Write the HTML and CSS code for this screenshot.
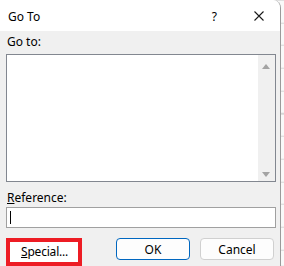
FILE: index.html
```html
<!DOCTYPE html>
<html lang="en">
<head>
    <meta charset="UTF-8">
    <title>Go To</title>
    <link rel="stylesheet" href="styles.css">
</head>
<body>
    <div class="dialogo">
        <div class="titulo">
            <span class="titulo-texto">Go To</span>
            <span class="ayuda">?</span>
            <svg class="cerrar" width="10" height="10" viewBox="0 0 10 10">
                <path d="M0.5 0.5 L9.5 9.5 M9.5 0.5 L0.5 9.5" stroke="#1a1a1a" stroke-width="1.1" fill="none"/>
            </svg>
        </div>
        <div class="cuerpo">
            <div class="etiqueta">Go to:</div>
            <div class="lista">
                <div class="lista-area"></div>
                <div class="barra">
                    <span class="flecha arriba"></span>
                    <span class="flecha abajo"></span>
                </div>
            </div>
            <div class="etiqueta etiqueta-ref"><u>R</u>eference:</div>
            <div class="entrada"><span class="cursor"></span></div>
            <div class="botones">
                <div class="marca-roja">
                    <span class="boton-especial"><u>S</u>pecial...</span>
                </div>
                <span class="boton primario">OK</span>
                <span class="boton">Cancel</span>
            </div>
        </div>
    </div>
</body>
</html>
```

FILE: styles.css
```css
body {
    margin: 0;
    height: 266px;
    overflow: hidden;
    background-color: #f9f9f9;
    background-image: repeating-linear-gradient(to bottom, #d6d6d6 0, #d6d6d6 1px, transparent 1px, transparent 22.7px);
    background-position: 0 -0.3px;
    font-family: "Noto Sans", "Open Sans", sans-serif;
    font-size: 12px;
    color: #000;
}

.dialogo {
    width: 280px;
    height: 266px;
    background: #f0f0f0;
    border-right: 1px solid #9a9a9a;
    border-top-right-radius: 8px;
    overflow: hidden;
    display: flex;
    flex-direction: column;
}

.titulo {
    height: 31px;
    background: #fff;
    display: flex;
    align-items: center;
    padding: 0 16px 0 8px;
    flex-shrink: 0;
}

.titulo-texto {
    flex: 1;
    font-size: 12px;
    padding-top: 1px;
}

.ayuda {
    font-size: 12px;
    margin-right: 37px;
    padding-top: 1px;
}

.cerrar {
    display: block;
}

.cuerpo {
    padding: 3px 0 0 6px;
    display: flex;
    flex-direction: column;
}

.etiqueta {
    line-height: 16px;
    margin-left: 1px;
    height: 16px;
}

.lista {
    margin-top: 4px;
    width: 268px;
    height: 126px;
    border: 1px solid #828790;
    background: #fff;
    display: flex;
}

.lista-area {
    flex: 1;
}

.barra {
    width: 17px;
    background: #f0f0f0;
    position: relative;
}

.flecha {
    position: absolute;
    left: 4px;
    width: 0;
    height: 0;
    border-left: 4px solid transparent;
    border-right: 4px solid transparent;
}

.arriba {
    top: 9px;
    border-bottom: 5px solid #a3a3a3;
}

.abajo {
    bottom: 4px;
    border-top: 5px solid #a3a3a3;
}

.etiqueta-ref {
    margin-top: 8px;
}

.entrada {
    margin-top: 1px;
    height: 19px;
    border: 1px solid #a0a0a0;
    background: #fff;
    display: flex;
    align-items: center;
    padding-left: 3px;
    width: 265px;
}

.cursor {
    width: 1px;
    height: 13px;
    background: #000;
}

.botones {
    margin-top: 10px;
    display: flex;
    align-items: flex-start;
}

.marca-roja {
    width: 68px;
    height: 20px;
    border: 4px solid #ed1c24;
    background: #fff;
    display: flex;
    align-items: center;
}

.boton-especial {
    margin-left: 11px;
    line-height: 16px;
    letter-spacing: -0.2px;
}

.boton {
    box-sizing: border-box;
    width: 74px;
    height: 22px;
    border: 1px solid #d0d0d0;
    border-radius: 4px;
    background: #fdfdfd;
    display: flex;
    align-items: center;
    justify-content: center;
    margin-left: 10px;
}

.boton.primario {
    margin-left: 34px;
    border-color: #0067c0;
}
```
